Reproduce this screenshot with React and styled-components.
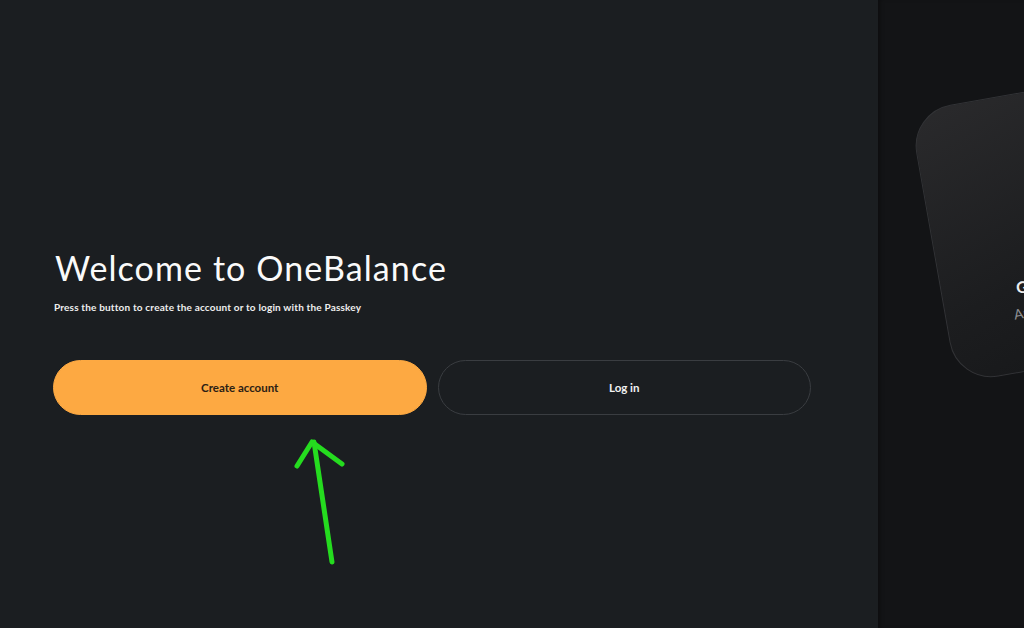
import React from 'react'
import styled, { createGlobalStyle } from 'styled-components'

const GlobalStyle = createGlobalStyle`
  html, body {
    margin: 0;
    padding: 0;
    background: #1b1e21;
  }
  body {
    font-family: 'Lato', 'Noto Sans', sans-serif;
    color: #f4f4f4;
  }
`

const Page = styled.main`
  display: flex;
  width: 100vw;
  height: 100vh;
  overflow: hidden;
`

const Intro = styled.section`
  position: relative;
  flex: 0 0 878px;
  box-sizing: border-box;
  padding: 248px 67px 0 53px;
  background: #1b1e21;
`

const Title = styled.h1`
  margin: 0 0 0 2px;
  font-size: 34px;
  font-weight: 400;
  line-height: 40px;
  letter-spacing: 1.1px;
  color: #fafafa;
`

const Subtitle = styled.p`
  margin: 12px 0 0 1px;
  font-size: 10px;
  font-weight: 700;
  line-height: 14px;
  letter-spacing: 0.18px;
  color: #eeeeee;
`

const Actions = styled.div`
  display: grid;
  grid-template-columns: 1fr 1fr;
  gap: 11px;
  margin-top: 46px;
`

const Button = styled.button`
  height: 55px;
  border-radius: 28px;
  font-family: 'Lato', 'Noto Sans', sans-serif;
  font-size: 11.5px;
  font-weight: 700;
  cursor: pointer;
  border: 1px solid ${p => (p.$primary ? '#fda942' : '#3a3d41')};
  background: ${p => (p.$primary ? '#fda942' : '#1b1e21')};
  color: ${p => (p.$primary ? '#2b2014' : '#f2f2f2')};
`

const Arrow = styled.svg`
  position: absolute;
  left: 290px;
  top: 434px;
  width: 60px;
  height: 135px;
  overflow: visible;
`

const Showcase = styled.aside`
  position: relative;
  flex: 1;
  background: #131416;
  overflow: hidden;
  box-shadow: inset 4px 0 4px -2px rgba(0, 0, 0, 0.35);
`

const Card = styled.div`
  position: absolute;
  left: 31px;
  top: 112px;
  width: 320px;
  height: 276px;
  box-sizing: border-box;
  padding: 181px 0 0 74px;
  border-radius: 42px;
  border: 1px solid #323336;
  background: linear-gradient(160deg, #2a2a2c 0%, #1c1d1f 55%, #141517 100%);
  transform: rotate(-10deg);
  transform-origin: 0 0;
`

const CardTitle = styled.div`
  font-size: 16px;
  font-weight: 700;
  color: #ededed;
`

const CardText = styled.div`
  margin-top: 8px;
  margin-left: -7px;
  font-size: 14px;
  color: #8d8e91;
`

export default function App() {
  return (
    <>
      <GlobalStyle />
      <Page>
        <Intro>
          <Title>Welcome to OneBalance</Title>
          <Subtitle>Press the button to create the account or to login with the Passkey</Subtitle>
          <Actions>
            <Button $primary>Create account</Button>
            <Button>Log in</Button>
          </Actions>
          <Arrow viewBox="0 0 60 135">
            <g fill="none" stroke="#25dc1f" strokeWidth="5" strokeLinecap="round" strokeLinejoin="round">
              <path d="M42 128 L24 8" />
              <path d="M7 32 L22 8 L52 30" />
            </g>
          </Arrow>
        </Intro>
        <Showcase>
          <Card>
            <CardTitle>Get started</CardTitle>
            <CardText>Any chain, one balance</CardText>
          </Card>
        </Showcase>
      </Page>
    </>
  )
}
